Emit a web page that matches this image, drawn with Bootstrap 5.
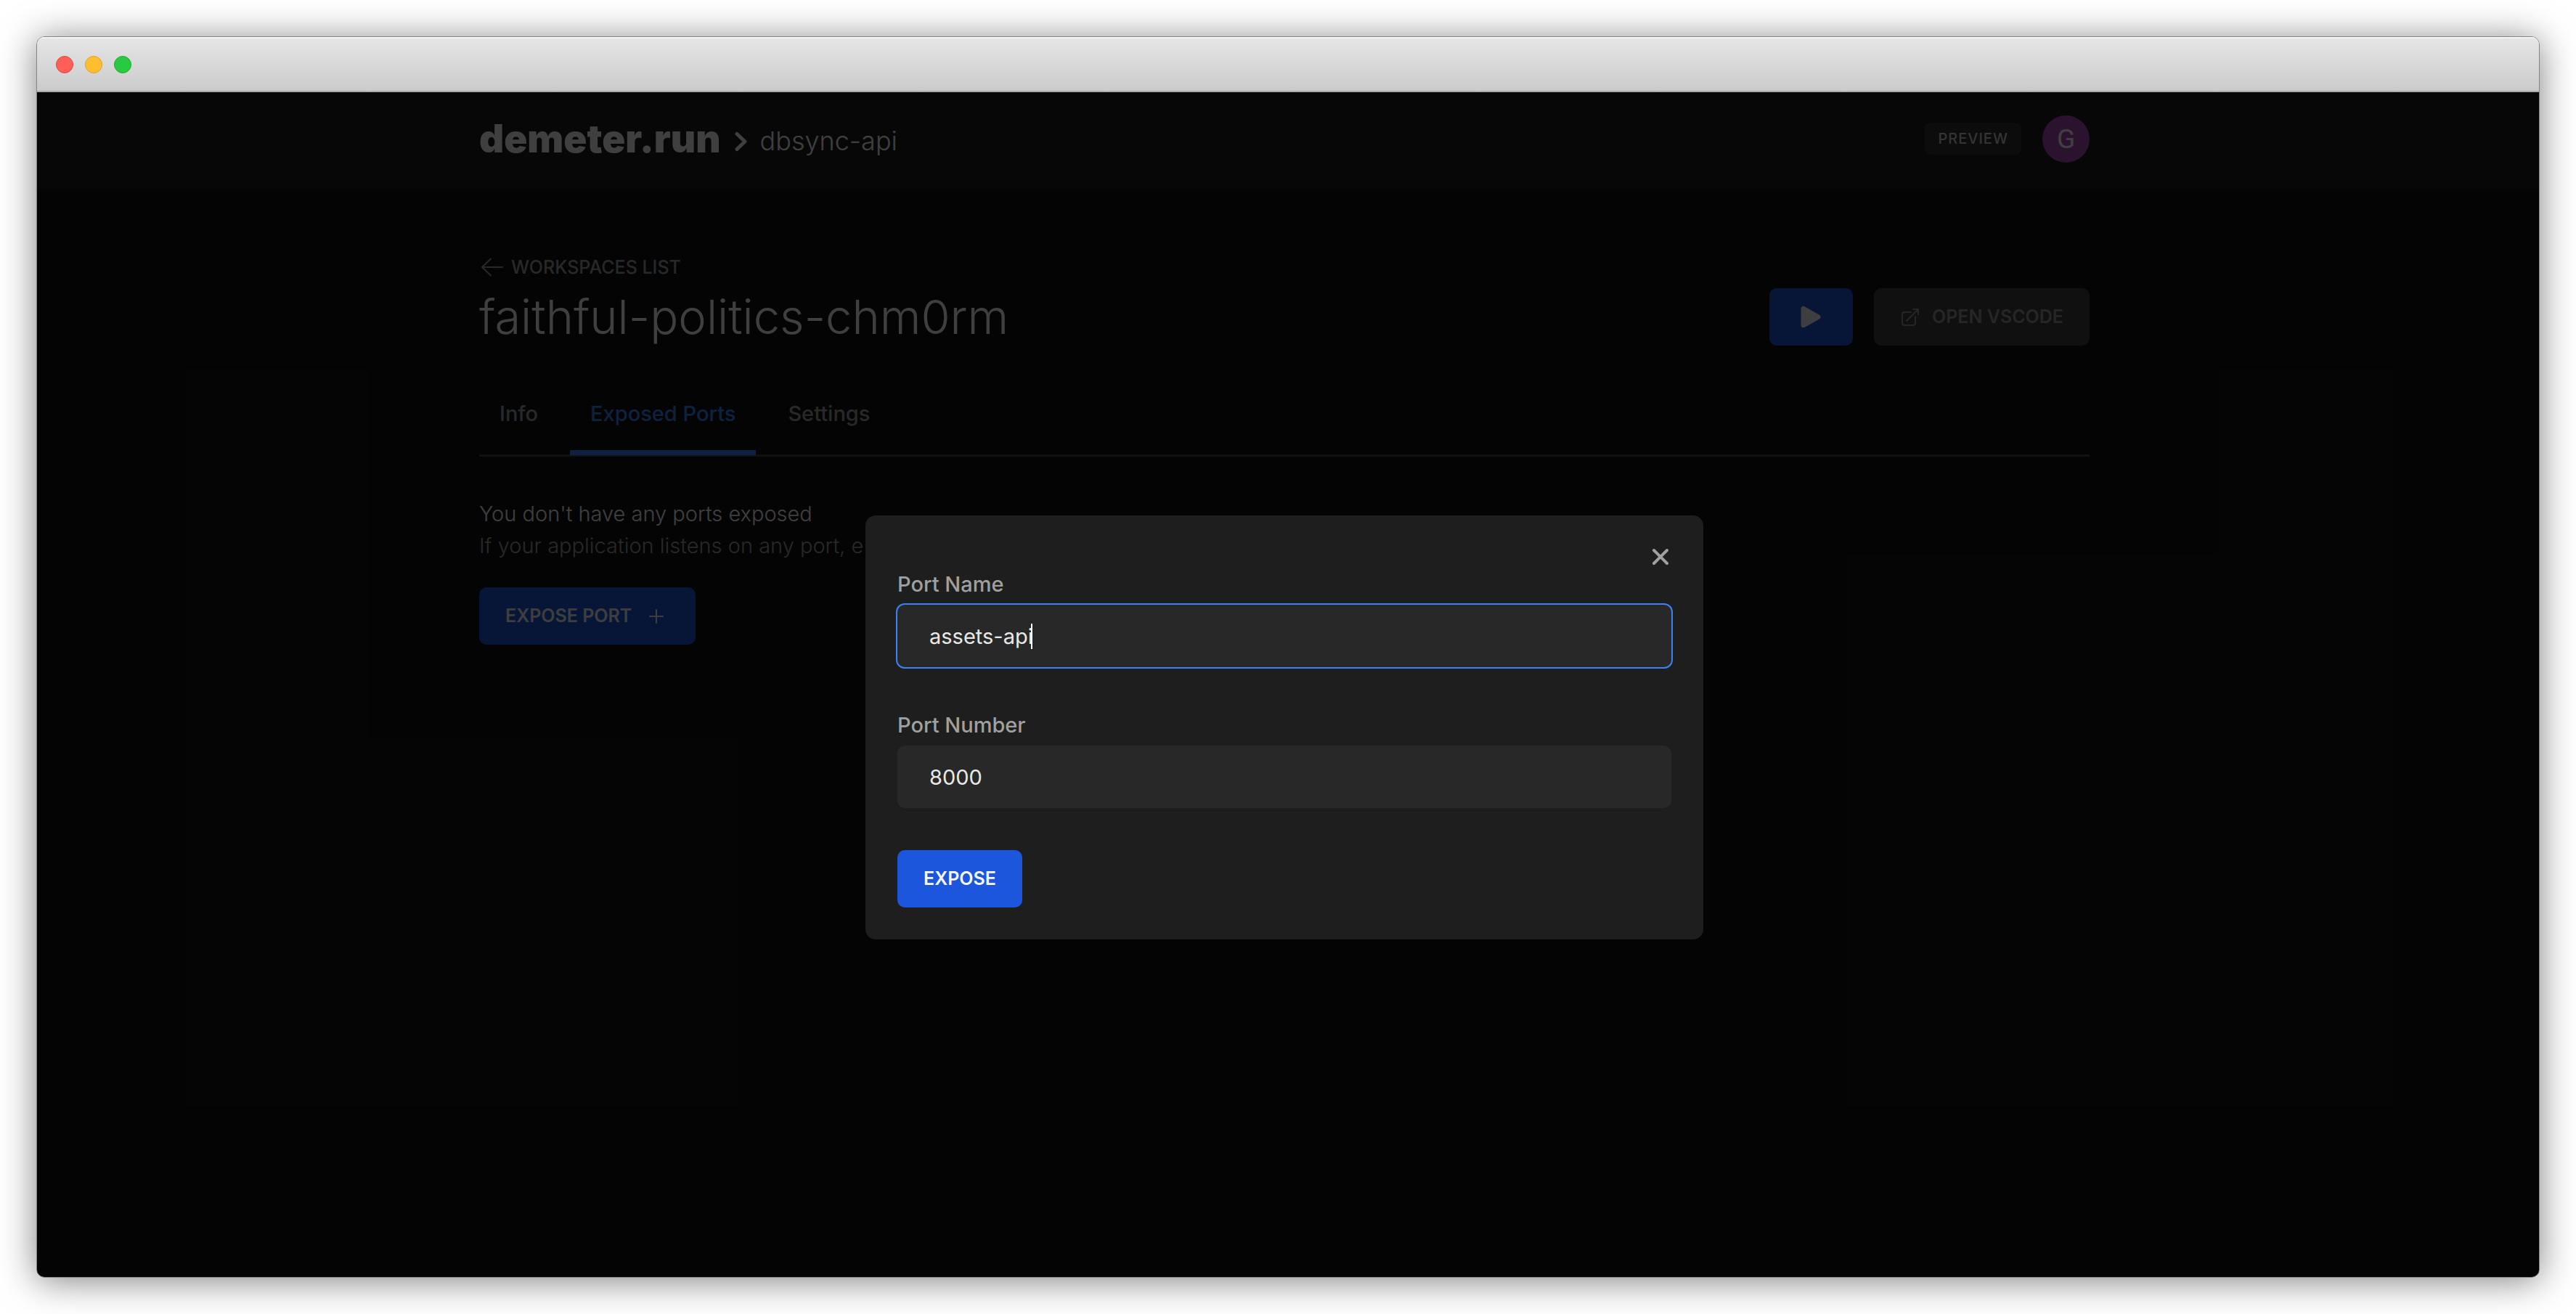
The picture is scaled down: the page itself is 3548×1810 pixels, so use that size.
<!DOCTYPE html>
<html lang="en">
<head>
<meta charset="utf-8">
<meta name="viewport" content="width=device-width, initial-scale=1">
<title>demeter.run</title>
<link href="https://cdn.jsdelivr.net/npm/bootstrap@5.3.0/dist/css/bootstrap.min.css" rel="stylesheet">
<style>
  :root { --blue: #1c56dc; --tone-muted: #a0a0a0; --tone-text: #fafafa; --gutter: 10px; }
  body { background: #fff; font-family: Inter, "Liberation Sans", sans-serif; font-size: 29px; line-height: 44px; padding: 50px; }
  a { color: inherit; text-decoration: none; }
  svg { display: block; flex: none; }

  /* desktop window */
  .app-window { border: 1px solid #858585; border-radius: 11px; box-shadow: 0 4px 50px rgba(0,0,0,.5); }
  .title-strip { height: 76px; padding: 2px 26px 0; gap: 16px; background: linear-gradient(#e6e6e6, #cbcbcb); border-bottom: 2px solid #a9adab; box-shadow: inset 0 2px 0 #f4f4f4; }
  .light { width: 24px; height: 24px; border-radius: 50%; border: 1px solid; }
  .light-close { background: #ff5f57; border-color: #e2463f; }
  .light-min { background: #ffbe2f; border-color: #dfa023; }
  .light-max { background: #28ca42; border-color: #1dad2b; }

  /* page */
  .viewport { background: #121212; color: var(--tone-text); }
  .page-pad { padding-right: var(--gutter); }
  .page-width { max-width: 2218px; }
  .top-bar { background: #1c1c1c; height: 136px; padding-bottom: 8px; }
  .brand { font-size: 53px; line-height: 60px; font-weight: 900; }
  .chevron { margin: 8px 14px 0 16px; }
  .crumb { font-size: 36px; font-weight: 300; padding-top: 6px; }
  .tag { font-size: 20px; line-height: 44px; font-weight: 500; letter-spacing: 1px; padding: 0 18px; border-radius: 8px; background: #303030; color: #d0d0d0; }
  .avatar { width: 65px; height: 65px; margin-left: 29px; border: 0; padding: 0; background: #ab47bc; color: #fff; font: 400 37px/65px Roboto, sans-serif; }
  .main-area { padding-top: 89px; }
  .back-link { font-size: 25px; line-height: 32px; font-weight: 500; gap: 10px; margin-bottom: 13px; color: var(--tone-muted); }
  .page-title { font-size: 65px; line-height: 79px; font-weight: 300; margin: 0; }
  .actions { gap: 29px; }
  .btn-app { --bs-btn-border-width: 0; --bs-btn-color: #f5f5f5; --bs-btn-bg: var(--blue); --bs-btn-border-radius: 10px; --bs-btn-font-weight: 600; --bs-btn-font-size: 25px; --bs-btn-padding-x: 36px; --bs-btn-padding-y: 0; --bs-btn-line-height: 79px; height: 79px; display: inline-flex; align-items: center; }
  .btn-quiet { --bs-btn-bg: #404040; --bs-btn-color: #989898; }
  .btn-play { width: 115px; justify-content: center; }
  .tab-row { margin-top: 48px; gap: 16px; border-bottom: 3px solid #404040; }
  .tab-row .nav-link { padding: 24px 28px 28px; border-bottom: 7px solid transparent; margin-bottom: -1px; color: var(--tone-muted); font-weight: 500; }
  .tab-row .nav-link.active { color: #3b82f6; border-color: #3b82f6; }
  .empty-note { margin-top: 57px; margin-bottom: 35px; font-weight: 300; }
  .empty-note p { margin: 0; }
  .soft { color: var(--tone-muted); }

  /* dialog over the page */
  .shade { position: absolute; inset: 0; background: rgba(0,0,0,.75); padding: 118px var(--gutter) 0 0; }
  .dialog { width: 1154px; padding: 37px 44px 44px; background: #1e1e1e; border-radius: 14px; color: #e8e8e8; }
  .close-x { width: 30px; height: 40px; padding: 0; border: 0; background: none; color: var(--tone-muted); }
  .field-label { line-height: 36px; margin-bottom: 10px; color: var(--tone-muted); font-weight: 500; }
  .field, .field:focus { height: 86px; padding: 0 44px; border: 0; border-radius: 10px; background: #282828; color: #e8e8e8; font-size: 29px; caret-color: transparent; box-shadow: none; }
  .field.is-current { box-shadow: 0 0 0 2px #3b82f6; }
  .field-group { margin-bottom: 62px; }
  .text-caret { position: absolute; left: 184px; top: 26px; width: 2px; height: 35px; background: #fff; }
  .submit-row { margin-top: -4px; }
</style>
</head>
<body class="d-flex flex-column min-vh-100">
<div class="app-window flex-grow-1 d-flex flex-column overflow-hidden">
  <div class="title-strip d-flex align-items-center">
    <span class="light light-close"></span><span class="light light-min"></span><span class="light light-max"></span>
  </div>

  <div class="viewport position-relative flex-grow-1">
    <header class="top-bar page-pad d-flex align-items-center">
      <div class="page-width w-100 mx-auto d-flex align-items-center justify-content-between">
        <nav class="d-flex align-items-center" aria-label="Breadcrumb">
          <a class="brand" href="#">demeter.run</a>
          <svg class="chevron" width="24" height="32" viewBox="0 0 24 32" fill="none" stroke="currentColor" stroke-width="5" stroke-linecap="round" stroke-linejoin="round"><path d="M6 5.500l11 10.500-11 10.500"/></svg>
          <a class="crumb" href="#">dbsync-api</a>
        </nav>
        <div class="d-flex align-items-center">
          <span class="tag">PREVIEW</span>
          <button class="avatar rounded-circle" type="button">G</button>
        </div>
      </div>
    </header>

    <main class="main-area page-pad">
      <div class="page-width w-100 mx-auto">
        <a class="back-link d-flex align-items-center" href="#">
          <svg width="34" height="28" viewBox="0 0 34 28" fill="none" stroke="currentColor" stroke-width="2" stroke-linecap="round" stroke-linejoin="round"><path d="M32 14H4M16 2.500L4 14l12 11.500"/></svg>
          WORKSPACES LIST
        </a>
        <div class="d-flex align-items-center justify-content-between">
          <h1 class="page-title">faithful-politics-chm0rm</h1>
          <div class="actions d-flex">
            <button class="btn btn-app btn-play" type="button" aria-label="Start">
              <svg width="32" height="32" viewBox="0 0 32 32" fill="currentColor"><path d="M2.500 4.500c0-3 2.500-4.500 5-3.200l20 11.200c2.800 1.600 2.800 4.600 0 6.200l-20 11.200c-2.500 1.300-5-.2-5-3.200z"/></svg>
            </button>
            <button class="btn btn-app btn-quiet" type="button">
              <svg width="28" height="28" viewBox="0 0 28 28" fill="none" stroke="currentColor" stroke-width="2" stroke-linecap="round" stroke-linejoin="round"><path d="M15 7H6a3 3 0 0 0-3 3v12a3 3 0 0 0 3 3h12a3 3 0 0 0 3-3v-9M18 3h7v7M25 3L9 19"/></svg>
              <span class="ms-3">OPEN VSCODE</span>
            </button>
          </div>
        </div>

        <nav class="nav tab-row">
          <a class="nav-link" href="#">Info</a>
          <a class="nav-link active" aria-current="page" href="#">Exposed Ports</a>
          <a class="nav-link" href="#">Settings</a>
        </nav>

        <div class="empty-note">
          <p>You don't have any ports exposed</p>
          <p class="soft">If your application listens on any port, e</p>
        </div>
        <button class="btn btn-app" type="button">EXPOSE PORT
          <svg class="ms-4 me-2" width="20" height="22" viewBox="0 0 20 22" fill="none" stroke="currentColor" stroke-width="2" stroke-linecap="round"><path d="M10 2v18M1 11h18"/></svg>
        </button>
      </div>
    </main>

    <div class="shade d-flex align-items-center justify-content-center">
      <form class="dialog" role="dialog" aria-label="Expose port">
        <div class="d-flex justify-content-end">
          <button class="close-x d-flex align-items-center justify-content-center" type="button" aria-label="Close">
            <svg width="24" height="24" viewBox="0 0 24 24" fill="none" stroke="currentColor" stroke-width="4" stroke-linecap="round"><path d="M3 3l18 18M21 3L3 21"/></svg>
          </button>
        </div>
        <div class="field-group">
          <label class="field-label d-block" for="portName">Port Name</label>
          <div class="position-relative">
            <input class="form-control field is-current" id="portName" type="text" value="assets-api">
            <span class="text-caret"></span>
          </div>
        </div>
        <div class="field-group">
          <label class="field-label d-block" for="portNumber">Port Number</label>
          <input class="form-control field" id="portNumber" type="text" inputmode="numeric" value="8000">
        </div>
        <div class="submit-row">
          <button class="btn btn-app" type="submit">EXPOSE</button>
        </div>
      </form>
    </div>
  </div>
</div>
<script src="https://cdn.jsdelivr.net/npm/bootstrap@5.3.0/dist/js/bootstrap.bundle.min.js"></script>
</body>
</html>
